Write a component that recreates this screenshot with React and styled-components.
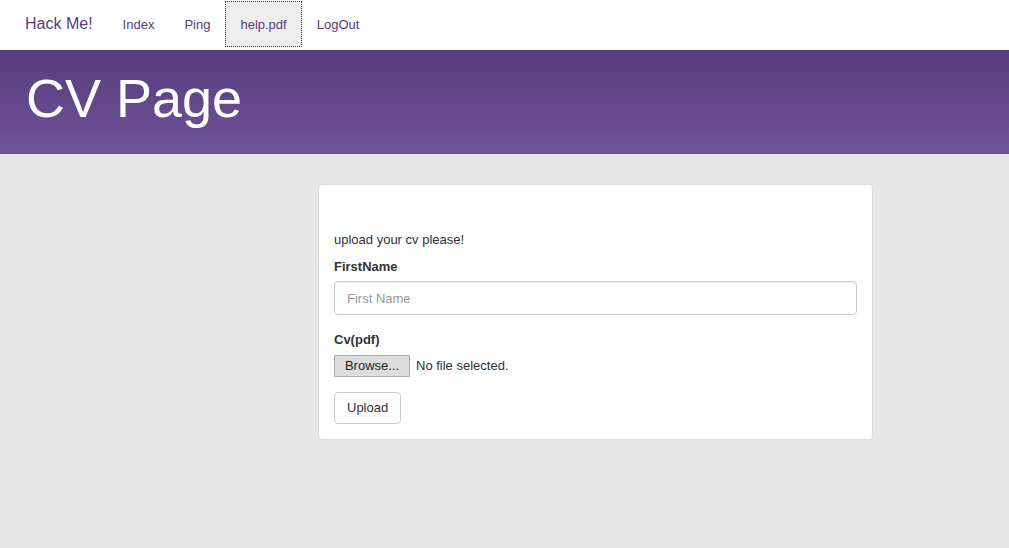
import React from 'react';
import styled, { createGlobalStyle } from 'styled-components';

const GlobalStyle = createGlobalStyle`
  html, body {
    margin: 0;
    padding: 0;
    height: 100%;
    background: #e7e7e7;
  }
  body {
    font-family: 'Liberation Sans', Arial, sans-serif;
    font-size: 13px;
    line-height: 20px;
    color: #333;
  }
  * { box-sizing: border-box; }
`

const Page = styled.div`
  min-height: 548px;
  background: #e7e7e7;
`

const Navbar = styled.nav`
  height: 50px;
  background: #fff;
  display: flex;
  align-items: flex-start;
  padding-left: 25px;
`

const Brand = styled.a`
  font-size: 16px;
  line-height: 48px;
  color: #563d7c;
  text-decoration: none;
  margin-right: 15px;
`

const NavLink = styled.a`
  display: block;
  height: 46px;
  margin-top: 1px;
  line-height: 46px;
  padding: 0 14px;
  color: #563d7c;
  text-decoration: none;
  background: ${p => (p.active ? '#eee' : 'transparent')};
  border: 1px dotted ${p => (p.active ? '#3d2b5a' : 'transparent')};
`

const Banner = styled.header`
  height: 104px;
  padding: 17px 26px 0;
  background: linear-gradient(to bottom, #563d7c 0%, #6f5499 100%);
`

const Title = styled.h1`
  margin: 0;
  font-size: 54px;
  font-weight: normal;
  line-height: normal;
  color: #fff;
`

const Main = styled.main`
  padding: 30px 0 40px 318px;
`

const Card = styled.div`
  width: 555px;
  background: #fff;
  border: 1px solid #ddd;
  border-radius: 4px;
  padding: 45px 15px 15px;
`

const Intro = styled.p`
  margin: 0 0 7px;
`

const Group = styled.div`
  margin-bottom: ${p => p.gap || 15}px;
`

const Label = styled.label`
  display: block;
  font-weight: bold;
  margin-bottom: ${p => p.gap || 4}px;
`

const TextInput = styled.input`
  display: block;
  width: 100%;
  height: 34px;
  padding: 6px 12px;
  font: inherit;
  color: #555;
  border: 1px solid #ccc;
  border-radius: 4px;
  box-shadow: inset 0 1px 1px rgba(0, 0, 0, 0.075);
  &::placeholder { color: #999; }
`

const FileRow = styled.div`
  display: flex;
  align-items: center;
  gap: 6px;
  height: 22px;
`

const Browse = styled.span`
  display: inline-block;
  height: 22px;
  width: 76px;
  line-height: 20px;
  text-align: center;
  color: #222;
  background: #dddddd;
  border: 1px solid #adadad;
`

const Button = styled.button`
  height: 32px;
  padding: 0 12px;
  font: inherit;
  color: #333;
  background: #fff;
  border: 1px solid #ccc;
  border-radius: 4px;
`

export default function App() {
  return (
    <Page>
      <GlobalStyle />
      <Navbar>
        <Brand href="#">Hack Me!</Brand>
        <NavLink href="#">Index</NavLink>
        <NavLink href="#">Ping</NavLink>
        <NavLink href="#" active>help.pdf</NavLink>
        <NavLink href="#">LogOut</NavLink>
      </Navbar>
      <Banner>
        <Title>CV Page</Title>
      </Banner>
      <Main>
        <Card>
          <Intro>upload your cv please!</Intro>
          <Group>
            <Label>FirstName</Label>
            <TextInput placeholder="First Name" />
          </Group>
          <Group>
            <Label gap={5}>Cv(pdf)</Label>
            <FileRow>
              <Browse>Browse...</Browse>
              <span>No file selected.</span>
            </FileRow>
          </Group>
          <Button>Upload</Button>
        </Card>
      </Main>
    </Page>
  );
}
